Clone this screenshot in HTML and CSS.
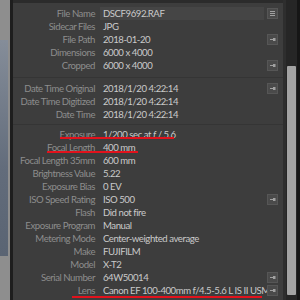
FILE: index.html
```html
<!DOCTYPE html>
<html lang="en">
<head>
  <meta charset="UTF-8">
  <title>Metadata</title>
  <link rel="stylesheet" href="styles.css">
</head>
<body>

<div class="frame">
  <div class="filmstrip"><div class="thumb"></div></div>
  <div class="edge"></div>

  <div class="panel">
    <div class="group first">
      <div class="row">
        <span class="label">File Name</span>
        <span class="value field">DSCF9692.RAF</span>
        <span class="btn"><svg viewBox="0 0 11 11"><path d="M3 3.5h5M3 5.5h5M3 7.5h5"/></svg></span>
      </div>
      <div class="row"><span class="label">Sidecar Files</span><span class="value">JPG</span></div>
      <div class="row">
        <span class="label">File Path</span><span class="value">2018-01-20</span>
        <span class="btn"><svg viewBox="0 0 11 11"><path d="M3 5.5h4"/><rect x="6.5" y="4.5" width="1.5" height="2"/></svg></span>
      </div>
      <div class="row"><span class="label">Dimensions</span><span class="value">6000 x 4000</span></div>
      <div class="row">
        <span class="label">Cropped</span><span class="value">6000 x 4000</span>
        <span class="btn"><svg viewBox="0 0 11 11"><path d="M3 5.5h4"/><rect x="6.5" y="4.5" width="1.5" height="2"/></svg></span>
      </div>
    </div>

    <div class="group">
      <div class="row">
        <span class="label">Date Time Original</span><span class="value">2018/1/20 4:22:14</span>
        <span class="btn"><svg viewBox="0 0 11 11"><path d="M3 5.5h4"/><rect x="6.5" y="4.5" width="1.5" height="2"/></svg></span>
      </div>
      <div class="row"><span class="label">Date Time Digitized</span><span class="value">2018/1/20 4:22:14</span></div>
      <div class="row"><span class="label">Date Time</span><span class="value">2018/1/20 4:22:14</span></div>
    </div>

    <div class="group">
      <div class="row mark-exposure"><span class="label">Exposure</span><span class="value">1/200 sec at <i>f</i> / 5.6</span></div>
      <div class="row mark-focal"><span class="label">Focal Length</span><span class="value">400 mm</span></div>
      <div class="row"><span class="label">Focal Length 35mm</span><span class="value">600 mm</span></div>
      <div class="row"><span class="label">Brightness Value</span><span class="value">5.22</span></div>
      <div class="row"><span class="label">Exposure Bias</span><span class="value">0 EV</span></div>
      <div class="row">
        <span class="label">ISO Speed Rating</span><span class="value">ISO 500</span>
        <span class="btn"><svg viewBox="0 0 11 11"><path d="M3 5.5h4"/><rect x="6.5" y="4.5" width="1.5" height="2"/></svg></span>
      </div>
      <div class="row"><span class="label">Flash</span><span class="value">Did not fire</span></div>
      <div class="row"><span class="label">Exposure Program</span><span class="value">Manual</span></div>
      <div class="row"><span class="label">Metering Mode</span><span class="value">Center-weighted average</span></div>
      <div class="row"><span class="label">Make</span><span class="value">FUJIFILM</span></div>
      <div class="row"><span class="label">Model</span><span class="value">X-T2</span></div>
      <div class="row">
        <span class="label">Serial Number</span><span class="value">64W50014</span>
        <span class="btn"><svg viewBox="0 0 11 11"><path d="M3 5.5h4"/><rect x="6.5" y="4.5" width="1.5" height="2"/></svg></span>
      </div>
      <div class="row mark-lens">
        <span class="label">Lens</span><span class="value">Canon EF 100-400mm f/4.5-5.6 L IS II USM</span>
        <span class="btn"><svg viewBox="0 0 11 11"><path d="M3 5.5h4"/><rect x="6.5" y="4.5" width="1.5" height="2"/></svg></span>
      </div>
    </div>
  </div>

  <div class="gutter"></div>
  <div class="scrollbar"><div class="scroll-thumb"></div></div>
  <div class="edge-right"></div>
</div>

</body>
</html>
```

FILE: styles.css
```css
body {
  margin: 0;
  background-color: #1b1b1b;
  font-family: Lato, "Open Sans", sans-serif;
  font-size: 9.6px;
  letter-spacing: -0.45px;
  overflow: hidden;
}
.frame {
  display: flex;
  height: 300px;
  width: 300px;
}
.filmstrip {
  width: 10px;
  background-color: #8e8e8e;
}
.filmstrip .thumb {
  margin-top: 40px;
  width: 8px;
  height: 216px;
  background: linear-gradient(#858d99, #626c7b 60%, #5a6473);
}
.edge {
  width: 3px;
  background-color: #1e1e1e;
}
.panel {
  width: 270px;
  background-color: #3d3d3d;
  border-top: 3px solid #2b2b2b;
  overflow: hidden;
}
.group {
  padding: 3px 0 3px;
  border-top: 1px solid #353535;
}
.group.first {
  border-top: none;
  padding: 4px 0 5px;
}
.group:nth-child(2) {
  padding-top: 4px;
}
.row {
  position: relative;
  display: flex;
  align-items: center;
  height: 13px;
  line-height: 13px;
  white-space: nowrap;
}
.label {
  width: 82px;
  text-align: right;
  color: #8d8d8d;
  flex: none;
}
.value {
  margin-left: 8px;
  color: #cacaca;
  flex: 1;
}
.value.field {
  background-color: #454545;
  margin-left: 5px;
  padding-left: 3px;
  margin-right: 19px;
}
.btn {
  position: absolute;
  right: 5px;
  top: 1px;
  width: 11px;
  height: 11px;
  box-sizing: border-box;
  background-color: #4a4a4a;
  border: 1px solid #565656;
}
.btn svg {
  display: block;
  width: 11px;
  height: 11px;
  margin: -1px;
  stroke: #a0a0a0;
  stroke-width: 1;
  fill: #a0a0a0;
}
.mark-exposure::after,
.mark-focal::after,
.mark-lens::after {
  content: "";
  position: absolute;
  height: 2px;
  background-color: #e2121c;
}
.mark-exposure::after {
  left: 47px;
  width: 114px;
  top: 9px;
}
.mark-focal::after {
  left: 34px;
  width: 91px;
  top: 10px;
}
.mark-lens::after {
  left: 59px;
  width: 190px;
  top: 12px;
}
.gutter {
  width: 3px;
  background-color: #2e2e2e;
}
.scrollbar {
  width: 11px;
  background-color: #262626;
}
.scroll-thumb {
  margin: 66px 1px 0 1px;
  height: 229px;
  background-color: #a3a3a3;
  border-radius: 1px;
}
.edge-right {
  width: 3px;
  background-color: #161616;
}
```
